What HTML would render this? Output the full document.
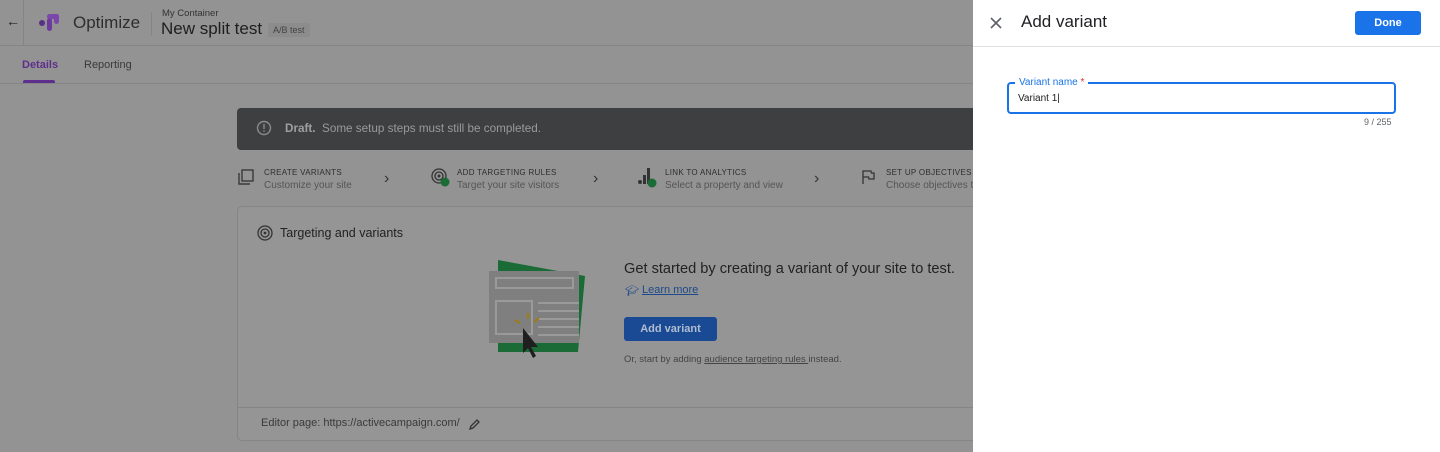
<!DOCTYPE html><html><head><style>
*{margin:0;padding:0;box-sizing:border-box}
body{width:1440px;height:452px;overflow:hidden;background:#939393;font-family:"Liberation Sans",sans-serif;position:relative;color:#2a2a2a}
.abs{position:absolute}
.t{white-space:nowrap}
</style></head><body>
<div class="abs" style="left:0;top:0;width:973px;height:46px;border-bottom:1px solid #858585"></div>
<div class="abs" style="left:23px;top:0;width:1px;height:46px;background:#858585"></div>
<div class="abs t" style="left:6px;top:13px;font-size:14px;color:#222">←</div>
<svg class="abs" style="left:38px;top:13px" width="22" height="20"><circle cx="4" cy="10" r="3" fill="#5a2f86"/><rect x="9" y="5" width="5" height="13" rx="2.5" fill="#6e3a9e"/><rect x="9" y="1" width="12" height="5" rx="2.5" fill="#7b47ab"/><rect x="16" y="1" width="5" height="10" rx="2.5" fill="#7b47ab"/></svg>
<div class="abs t" style="left:73px;top:13px;font-size:17px;color:#2e2e2e">Optimize</div>
<div class="abs" style="left:151px;top:12px;width:1px;height:24px;background:#858585"></div>
<div class="abs t" style="left:162px;top:8px;font-size:9.5px;color:#333">My Container</div>
<div class="abs t" style="left:161px;top:19px;font-size:17px;color:#1e1e1e">New split test</div>
<div class="abs t" style="left:268px;top:23px;font-size:9px;color:#444;background:#8c8c8c;padding:2px 5px">A/B test</div>
<div class="abs t" style="left:22px;top:59px;font-size:11px;color:#5e2f8c;font-weight:bold">Details</div>
<div class="abs" style="left:23px;top:80px;width:32px;height:3px;background:#5e2f8c;border-radius:2px 2px 0 0"></div>
<div class="abs t" style="left:84px;top:59px;font-size:11px;color:#3a3a3a">Reporting</div>
<div class="abs" style="left:0;top:83px;width:973px;height:1px;background:#858585"></div>
<div class="abs" style="left:237px;top:108px;width:740px;height:42px;background:#3d3f41;border-radius:4px 0 0 4px"></div>
<svg class="abs" style="left:256px;top:120px" width="16" height="16"><circle cx="8" cy="8" r="6.5" fill="none" stroke="#8a8a8a" stroke-width="1.4"/><rect x="7.3" y="4" width="1.4" height="5" fill="#8a8a8a"/><rect x="7.3" y="10.3" width="1.4" height="1.4" fill="#8a8a8a"/></svg>
<div class="abs t" style="left:285px;top:122px;font-size:11.7px;color:#9a9a9a"><b style="color:#a0a0a0">Draft.</b>&nbsp;&nbsp;Some setup steps must still be completed.</div>
<svg class="abs" style="left:238px;top:169px" width="16" height="16" fill="none" stroke="#3a3a3a" stroke-width="1.4"><rect x="4" y="1" width="11" height="11"/><path d="M1 4v11h11"/></svg>
<div class="abs t" style="left:264px;top:168px;font-size:8px;letter-spacing:.3px;color:#2e2e2e">CREATE VARIANTS</div>
<div class="abs t" style="left:264px;top:180px;font-size:10px;color:#555">Customize your site</div>
<div class="abs t" style="left:384px;top:170px;font-size:16px;color:#333">›</div>
<svg class="abs" style="left:431px;top:168px" width="20" height="20"><circle cx="8" cy="8" r="7" fill="none" stroke="#333" stroke-width="1.3"/><circle cx="8" cy="8" r="4" fill="none" stroke="#333" stroke-width="1.3"/><circle cx="8" cy="8" r="1.5" fill="#333"/><circle cx="14" cy="14" r="4.5" fill="#1a6b35"/></svg>
<div class="abs t" style="left:457px;top:168px;font-size:8px;letter-spacing:.3px;color:#2e2e2e">ADD TARGETING RULES</div>
<div class="abs t" style="left:457px;top:180px;font-size:10px;color:#555">Target your site visitors</div>
<div class="abs t" style="left:593px;top:170px;font-size:16px;color:#333">›</div>
<svg class="abs" style="left:637px;top:166px" width="22" height="22"><circle cx="3" cy="16" r="2" fill="#333"/><rect x="6" y="9" width="3" height="9" fill="#333"/><rect x="10" y="2" width="3" height="16" fill="#333"/><circle cx="15" cy="17" r="4.5" fill="#1a6b35"/></svg>
<div class="abs t" style="left:665px;top:168px;font-size:8px;letter-spacing:.3px;color:#2e2e2e">LINK TO ANALYTICS</div>
<div class="abs t" style="left:665px;top:180px;font-size:10px;color:#555">Select a property and view</div>
<div class="abs t" style="left:814px;top:170px;font-size:16px;color:#333">›</div>
<svg class="abs" style="left:861px;top:169px" width="14" height="16" fill="none" stroke="#333" stroke-width="1.3"><path d="M2 15V2h8l.5 2H13v6H8l-.5-2H2"/></svg>
<div class="abs t" style="left:886px;top:168px;font-size:8px;letter-spacing:.3px;color:#2e2e2e">SET UP OBJECTIVES</div>
<div class="abs t" style="left:886px;top:180px;font-size:10px;color:#555">Choose objectives t</div>
<div class="abs" style="left:237px;top:206px;width:745px;height:235px;border:1px solid #858585;border-radius:5px;background:#959595"></div>
<svg class="abs" style="left:257px;top:225px" width="16" height="16"><circle cx="8" cy="8" r="7" fill="none" stroke="#333" stroke-width="1.3"/><circle cx="8" cy="8" r="4" fill="none" stroke="#333" stroke-width="1.3"/><circle cx="8" cy="8" r="1.4" fill="#333"/></svg>
<div class="abs t" style="left:280px;top:226px;font-size:12.5px;color:#222">Targeting and variants</div>
<svg class="abs" style="left:488px;top:258px" width="100" height="112"><polygon points="10,2 97,18 90,94 10,94" fill="#1a6b35"/><rect x="1" y="13" width="90" height="72" fill="#7f7f7f"/><rect x="8" y="20" width="77" height="10" fill="none" stroke="#9a9a9a" stroke-width="2"/><rect x="8" y="43" width="36" height="33" fill="none" stroke="#9a9a9a" stroke-width="2"/><path d="M50 45h41M50 53h41M50 61h41M50 69h41M50 77h41" stroke="#9a9a9a" stroke-width="2"/><path d="M27 62l5 3M40 55v6M51 60l-5 4" stroke="#a07b10" stroke-width="2"/><path d="M35 70v25l5-5 5 10 3-2-5-9h7z" fill="#1f1f1f"/></svg>
<div class="abs t" style="left:624px;top:261px;font-size:14.6px;color:#222">Get started by creating a variant of your site to test.</div>
<div class="abs t" style="left:625px;top:284px;font-size:11px;color:#1d4a8a">🎓&#xFE0E;</div>
<div class="abs t" style="left:642px;top:284px;font-size:11px;color:#1d4a8a;text-decoration:underline">Learn more</div>
<div class="abs" style="left:624px;top:317px;width:93px;height:24px;background:#1a4a93;border-radius:3px;color:#b0bdd2;font-size:11px;font-weight:bold;text-align:center;line-height:24px">Add variant</div>
<div class="abs t" style="left:624px;top:354px;font-size:9.5px;color:#444">Or, start by adding <u>audience targeting rules </u>instead.</div>
<div class="abs" style="left:238px;top:407px;width:744px;height:1px;background:#858585"></div>
<div class="abs t" style="left:261px;top:417px;font-size:11px;color:#3a3a3a">Editor page: https://activecampaign.com/</div>
<svg class="abs" style="left:469px;top:419px" width="11" height="11"><path d="M1 10l1-3 6-6 2 2-6 6z" fill="none" stroke="#333" stroke-width="1.3"/></svg>
<div class="abs" style="left:973px;top:0;width:467px;height:452px;background:#fff"></div>
<div class="abs" style="left:973px;top:46px;width:467px;height:1px;background:#e0e0e0"></div>
<svg class="abs" style="left:990px;top:17px" width="12" height="12" stroke="#5f6368" stroke-width="1.6"><path d="M1 1l10 10M11 1L1 11"/></svg>
<div class="abs t" style="left:1021px;top:12px;font-size:17px;color:#202124">Add variant</div>
<div class="abs" style="left:1355px;top:11px;width:66px;height:24px;background:#1a73e8;border-radius:3px;color:#fff;font-size:11px;font-weight:bold;text-align:center;line-height:24px">Done</div>
<div class="abs" style="left:1007px;top:82px;width:389px;height:32px;border:2px solid #1a73e8;border-radius:4px"></div>
<div class="abs t" style="left:1015px;top:77px;font-size:10px;color:#1a73e8;background:#fff;padding:0 4px">Variant name <span style="color:#d93025">*</span></div>
<div class="abs t" style="left:1018px;top:93px;font-size:10px;color:#202124">Variant 1<span style="font-weight:100">|</span></div>
<div class="abs t" style="left:1364px;top:117px;font-size:9px;color:#5f6368">9 / 255</div>
</body></html>
